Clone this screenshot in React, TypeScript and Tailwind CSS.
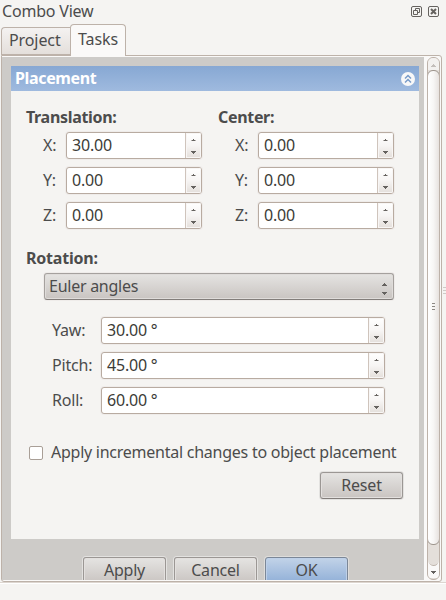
import type { ReactNode } from "react";

function Arrows({ wide = false }: { wide?: boolean }) {
  return wide ? (
    <svg width="7" height="14" viewBox="0 0 7 14" shapeRendering="crispEdges">
      <path d="M3 1h1v1h1v1h1v1H1V3h1V2h1z M1 10h5v1H5v1H4v1H3v-1H2v-1H1z" fill="#65625f" />
    </svg>
  ) : (
    <svg width="7" height="17" viewBox="0 0 7 17" shapeRendering="crispEdges">
      <path d="M3 2h1v1h1v1H2V3h1z M1 14h5v1H5v1H4v1H3v-1H2v-1H1z" fill="#65625f" />
      <path d="M1 3h1v1H1z M5 3h1v1H5z" fill="#b5b1ae" />
    </svg>
  );
}

function SpinBox({ value, className }: { value: string; className: string }) {
  return (
    <div
      className={
        "flex h-[27px] overflow-hidden rounded-[3px] border border-[#b8aba1] bg-white shadow-[0_0_0_1px_#efecea] " +
        className
      }
    >
      <div className="flex-1 whitespace-pre pl-[5px] leading-[25px] tracking-[-0.2px] text-[#3c3b37]">{value}</div>
      <div className="flex w-4 items-center justify-center border-l border-[#cfc4bc] bg-linear-to-b from-white via-[#f7f5f4] to-[#e4dfdb] shadow-[inset_0_0_0_1px_#f8f6f5]">
        <Arrows />
      </div>
    </div>
  );
}

function AxisGroup({ title }: { title: string }) {
  const rows = [
    ["X:", title === "Translation:" ? "30.00" : "0.00"],
    ["Y:", "0.00"],
    ["Z:", "0.00"],
  ];
  return (
    <div className="w-48">
      <div className="h-[27px] font-bold leading-[25px] tracking-[-0.32px]">{title}</div>
      <div className="flex flex-col gap-2 pl-[17px]">
        {rows.map(([axis, value]) => (
          <div key={axis} className="flex h-[27px]">
            <span className="w-[23px] leading-[27px]">{axis}</span>
            <SpinBox value={value} className="w-[136px]" />
          </div>
        ))}
      </div>
    </div>
  );
}

function Button({ children, primary = false }: { children: ReactNode; primary?: boolean }) {
  return (
    <button
      className={
        "flex h-[27px] w-[83px] shrink-0 justify-center rounded-[3px] border leading-[25px] " +
        (primary
          ? "border-[#7b8797] bg-linear-to-b from-[#c2d3e8] to-[#90afd7] shadow-[inset_0_0_0_1px_#bed0e8,0_0_0_1px_#dedddb]"
          : "border-[#9b9794] border-b-[#827d7a] bg-linear-to-b from-[#e5e4e2] to-[#c9c4c1] shadow-[inset_0_0_0_1px_#e3e0de,0_0_0_1px_#e3e2e0]")
      }
    >
      {children}
    </button>
  );
}

function TitleBar() {
  return (
    <div className="flex h-6 items-start justify-between pl-[2px] pr-[7px]">
      <span className="leading-[22px] tracking-[-0.2px]">Combo View</span>
      <div className="flex gap-[6px] pt-[6px]">
        <svg width="11" height="11" viewBox="0 0 11 11" fill="none" stroke="#65625f">
          <rect x=".5" y=".5" width="10" height="10" rx="1.5" />
          <path d="M4.5 4.5v-2h4v4h-2M2.5 4.5h4v4h-4z" />
        </svg>
        <svg width="11" height="11" viewBox="0 0 11 11" fill="none" stroke="#65625f">
          <rect x=".5" y=".5" width="10" height="10" rx="1.5" />
          <path d="M3 3l5 5M8 3l-5 5" strokeWidth="2" />
        </svg>
      </div>
    </div>
  );
}

function ScrollBar() {
  return (
    <div className="ml-[3px] flex w-[13px] flex-col overflow-hidden rounded-[6px] border border-[#bdb2a9] bg-[#e4dfda]">
      <div className="flex h-[12px] shrink-0 items-center justify-center bg-[#f3f1ef] pt-[3px]">
        <svg width="5" height="3" shapeRendering="crispEdges">
          <path d="M2 0h1v1h1v1h1v1H0V2h1V1h1z" fill="#c4bfbb" />
        </svg>
      </div>
      <div className="-mx-px flex h-[475px] shrink-0 flex-col items-center justify-center gap-[2px] rounded-[6px] border border-[#9d958d] bg-linear-to-r from-white via-[#f7f6f5] to-[#e7e2df] pb-[3px]">
        <i className="h-px w-[3px] bg-[#8d8883]" />
        <i className="h-px w-[3px] bg-[#8d8883]" />
        <i className="h-px w-[3px] bg-[#8d8883]" />
      </div>
      <div className="-mt-2 h-[29px] shrink-0 rounded-b-[6px] border-b border-[#bdb2a9]" />
      <div className="-mt-[6px] flex flex-1 items-center justify-center bg-[#faf9f8] [clip-path:path('M0_0Q1_6_6_6Q10_6_11_0V18H0Z')]">
        <svg width="5" height="3" shapeRendering="crispEdges" className="mt-[5px]">
          <path d="M0 0h5v1H4v1H3v1H2V2H1V1H0z" fill="#65625f" />
        </svg>
      </div>
    </div>
  );
}

const angles = [
  ["Yaw:", "30.00 °"],
  ["Pitch:", "45.00 °"],
  ["Roll:", "60.00 °"],
];

export default function App() {
  return (
    <div className="flex h-[600px] w-[446px] flex-col overflow-hidden bg-[#f5f4f2] font-['Noto_Sans',sans-serif] text-[16px] tracking-[-0.2px] text-[#4c4c4c]">
      <TitleBar />
      <div className="z-10 -mb-px flex h-8 items-end pl-px">
        <div className="mb-px h-[28px] w-[70px] rounded-tl-[4px] border border-r-0 border-[#bdb2a9] bg-linear-to-b from-[#f4f2f1] to-[#e4dfdb] pl-[7px] leading-[25px] tracking-[-0.1px]">
          Project
        </div>
        <div className="-ml-px h-8 w-[56px] rounded-t-[4px] border border-b-0 border-[#bdb2a9] bg-[#faf9f8] pl-[7px] leading-[28px] tracking-[-0.1px]">
          Tasks
        </div>
      </div>
      <div className="flex">
        <div className="ml-px flex h-[527px] w-[441px] rounded-b-[3px] rounded-tr-[3px] border border-[#bdb2a9] bg-[#faf9f8] pt-px pb-px">
          <div className="flex w-[422px] flex-col overflow-hidden bg-[#cdcbc8] pl-[9px] pt-[9px]">
            <div className="flex h-[25px] w-[408px] shrink-0 items-center justify-between bg-linear-to-b from-[#87a8d3] to-[#9fbadf] pl-1 pr-1 font-bold text-white">
              <span className="pb-px leading-[24px] tracking-[-0.35px]">Placement</span>
              <svg width="14" height="14" viewBox="0 0 14 14">
                <circle cx="7" cy="7" r="7" fill="#f8f8f8" />
                <path d="M4 6.5l3-3 3 3M4 10.5l3-3 3 3" fill="none" stroke="#789bc9" strokeWidth="1.5" />
              </svg>
            </div>
            <div className="h-[448px] w-[408px] shrink-0 bg-[#f5f4f2] pl-[15px] pt-[14px]">
              <div className="flex">
                <AxisGroup title="Translation:" />
                <AxisGroup title="Center:" />
              </div>
              <div className="mt-[17px] h-[25px] font-bold leading-[24px]">Rotation:</div>
              <div className="ml-[18px] mt-[2px] flex h-[27px] w-[350px] justify-between rounded-[3px] border border-[#a5a19e] border-b-[#827d7a] bg-linear-to-b from-[#e5e4e2] to-[#c9c4c1] pl-[4px] pr-[5px] shadow-[inset_0_0_0_1px_#dfdcda,0_0_0_1px_#efecea]">
                <span className="leading-[25px] tracking-[-0.26px]">Euler angles</span>
                <span className="pt-[8px]">
                  <Arrows wide />
                </span>
              </div>
              <div className="mt-[17px] flex flex-col gap-2 pl-[26px]">
                {angles.map(([name, value]) => (
                  <div key={name} className="flex h-[27px]">
                    <span className="w-[49px] leading-[27px]">{name}</span>
                    <SpinBox value={value} className="w-[284px]" />
                  </div>
                ))}
              </div>
              <label className="mt-[26px] flex h-[25px] items-center pl-[3px]">
                <span className="h-[14px] w-[14px] rounded-[2px] border border-[#a99f97] bg-white" />
                <span className="ml-2 whitespace-nowrap pb-[2px] tracking-[-0.25px]">
                  Apply incremental changes to object placement
                </span>
              </label>
              <div className="mt-[7px] flex justify-end pr-4">
                <Button>Reset</Button>
              </div>
            </div>
            <div className="mt-[18px] flex gap-2 pl-[72px]">
              <Button>Apply</Button>
              <Button>Cancel</Button>
              <Button primary>OK</Button>
            </div>
          </div>
          <ScrollBar />
        </div>
        <div className="ml-px mt-[232px] flex flex-col gap-[2px]">
          <i className="h-px w-[3px] bg-[#cfcac6]" />
          <i className="h-px w-[3px] bg-[#cfcac6]" />
          <i className="h-px w-[3px] bg-[#cfcac6]" />
        </div>
      </div>
      <div className="h-[2px] shrink-0 border-t border-[#ddd6d0] bg-white" />
    </div>
  );
}
